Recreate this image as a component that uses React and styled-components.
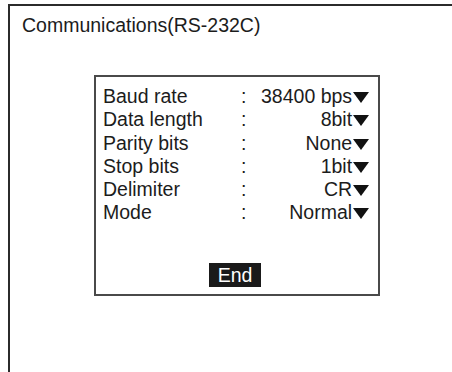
import React from 'react';
import styled, { createGlobalStyle } from 'styled-components';

const GlobalStyle = createGlobalStyle`
  html, body {
    margin: 0;
    padding: 0;
    background: #fff;
  }
  body {
    font-family: 'Liberation Sans', Arial, sans-serif;
    color: #1c1c1c;
  }
`;

const Frame = styled.div`
  box-sizing: border-box;
  margin: 4px 0 0 8px;
  height: 368px;
  border-top: 2px solid #2b2b2b;
  border-left: 2px solid #2b2b2b;
  padding: 8px 0 0 12px;
`;

const Title = styled.div`
  font-size: 19.5px;
  line-height: 22px;
`;

const Dialog = styled.div`
  box-sizing: border-box;
  width: 286px;
  height: 221px;
  margin: 39px 0 0 72px;
  border: 2px solid #4a4a4a;
  padding: 8px 11px 7px 7px;
  display: flex;
  flex-direction: column;
`;

const Settings = styled.div`
  display: grid;
  grid-template-columns: 138px 20px 1fr;
  font-size: 19.5px;
  line-height: 23.3px;
`;

const Label = styled.span`
  white-space: nowrap;
`;

const Colon = styled.span``;

const Value = styled.span`
  text-align: right;
  white-space: nowrap;
`;

const Caret = styled.span`
  display: inline-block;
  width: 0;
  height: 0;
  margin-left: 1px;
  border-left: 8.5px solid transparent;
  border-right: 8.5px solid transparent;
  border-top: 11px solid #111;
`;

const EndButton = styled.button`
  align-self: center;
  margin-top: auto;
  width: 52px;
  height: 24px;
  padding: 0;
  border: none;
  background: #1a1a1a;
  color: #fff;
  font-family: 'Liberation Sans', Arial, sans-serif;
  font-size: 19.5px;
  line-height: 24px;
`;

const settings = [
  { label: 'Baud rate', value: '38400 bps' },
  { label: 'Data length', value: '8bit' },
  { label: 'Parity bits', value: 'None' },
  { label: 'Stop bits', value: '1bit' },
  { label: 'Delimiter', value: 'CR' },
  { label: 'Mode', value: 'Normal' },
];

const App = () => (
  <>
    <GlobalStyle />
    <Frame>
      <Title>Communications(RS-232C)</Title>
      <Dialog>
        <Settings>
          {settings.map(({ label, value }) => (
            <React.Fragment key={label}>
              <Label>{label}</Label>
              <Colon>:</Colon>
              <Value>
                {value}
                <Caret />
              </Value>
            </React.Fragment>
          ))}
        </Settings>
        <EndButton>End</EndButton>
      </Dialog>
    </Frame>
  </>
);

export default App;
